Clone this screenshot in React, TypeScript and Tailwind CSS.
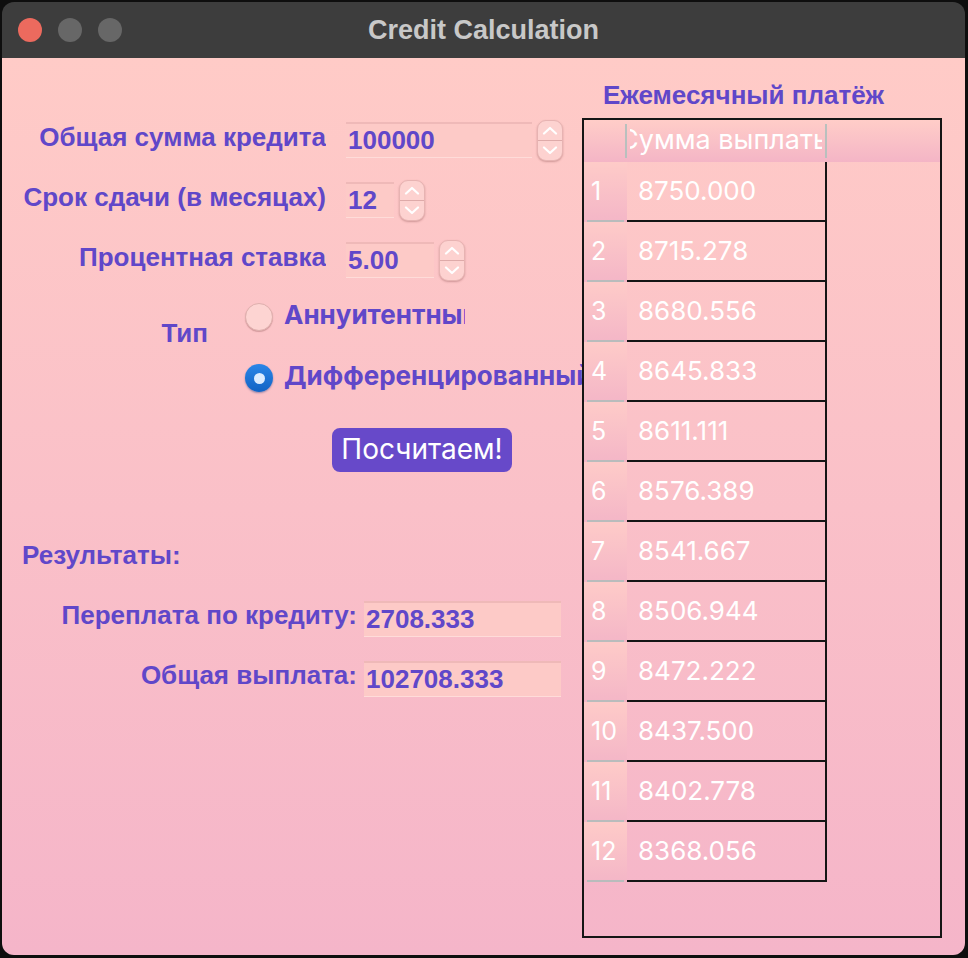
import React from 'react';

const purple = 'text-[#6047c9]';

const payments = [
  '8750.000', '8715.278', '8680.556', '8645.833', '8611.111', '8576.389',
  '8541.667', '8506.944', '8472.222', '8437.500', '8402.778', '8368.056',
];

function Spinner() {
  return (
    <div className="ml-[5px] w-[26px] h-[41px] rounded-[9px] bg-[#fdd2d0] border border-[#e7b3b2] shadow-[0_1px_2px_rgba(120,60,60,0.35)] flex flex-col">
      <div className="flex-1 flex items-center justify-center border-b border-[#deaaa9]">
        <svg width="16" height="9" viewBox="0 0 16 9" fill="none" stroke="#fff" strokeWidth="2.2" strokeLinecap="round" strokeLinejoin="round">
          <path d="M2 7.5 8 2l6 5.5" />
        </svg>
      </div>
      <div className="flex-1 flex items-center justify-center">
        <svg width="16" height="9" viewBox="0 0 16 9" fill="none" stroke="#fff" strokeWidth="2.2" strokeLinecap="round" strokeLinejoin="round">
          <path d="M2 1.5 8 7l6-5.5" />
        </svg>
      </div>
    </div>
  );
}

function Field({ value, width }: { value: string; width: string }) {
  return (
    <div className={`${width} h-[36px] flex items-center pl-[2px] border-t-2 border-[#efb9b8] border-b border-b-[#ffdcd9] bg-[#fdcac7] ${purple} font-bold text-[26px] whitespace-nowrap overflow-hidden`}>
      {value}
    </div>
  );
}

function FormRow({ label, value, width }: { label: string; value: string; width: string }) {
  return (
    <div className="flex items-center h-[40px]">
      <div className={`w-[324px] shrink-0 text-right pb-[6px] whitespace-nowrap overflow-hidden ${purple} font-bold text-[26px] leading-[30px]`}>
        {label}
      </div>
      <div className="ml-[20px] flex items-center">
        <Field value={value} width={width} />
        <Spinner />
      </div>
    </div>
  );
}

export default function App() {
  return (
    <div className="w-[968px] h-[958px] bg-[#0e0e0e] pt-[2px] pl-[2px] pr-[3px] pb-[3px]" style={{ fontFamily: '"Liberation Sans", Arial, sans-serif' }}>
      <div className="h-full rounded-[12px] overflow-hidden flex flex-col">
        {/* title bar */}
        <div className="h-[56px] shrink-0 bg-[#3d3d3d] grid grid-cols-[1fr_auto_1fr] items-center">
          <div className="flex items-center gap-[16px] pl-[16px]">
            <div className="w-[24px] h-[24px] rounded-full bg-[#ec6a5e]" />
            <div className="w-[24px] h-[24px] rounded-full bg-[#676767]" />
            <div className="w-[24px] h-[24px] rounded-full bg-[#676767]" />
          </div>
          <div className="text-[#c8c8c8] font-bold text-[27px]">Credit Calculation</div>
          <div />
        </div>

        {/* content */}
        <div className="flex-1 flex bg-gradient-to-b from-[#ffcbc7] to-[#f5b5c9]">
          {/* left */}
          <div className="w-[580px] shrink-0 overflow-hidden pt-[62px] flex flex-col">
            <div className="flex flex-col gap-[20px]">
              <FormRow label="Общая сумма кредита" value="100000" width="w-[186px]" />
              <FormRow label="Срок сдачи (в месяцах)" value="12" width="w-[48px]" />
              <FormRow label="Процентная ставка" value="5.00" width="w-[88px]" />
            </div>

            <div className="mt-[23px] flex items-start">
              <div className={`w-[243px] shrink-0 pr-[37px] text-right mt-[16px] leading-[28px] ${purple} font-bold text-[26px]`}>Тип</div>
              <div className="flex flex-col gap-[33px] shrink-0" style={{ fontFamily: 'Inter, "Liberation Sans", sans-serif' }}>
                <div className="flex items-center h-[28px]">
                  <div className="w-[28px] h-[28px] shrink-0 rounded-full bg-[#fdd4d2] border border-[#dfb0ae] shadow-[0_1px_1px_rgba(120,60,60,0.3)]" />
                  <span className={`ml-[11px] w-[181px] overflow-hidden whitespace-nowrap ${purple} font-bold text-[26px] pb-[6px]`}>Аннуитентный</span>
                </div>
                <div className="flex items-center h-[28px]">
                  <div className="w-[28px] h-[28px] shrink-0 rounded-full bg-gradient-to-b from-[#2a86e8] to-[#1263c4] shadow-[0_1px_2px_rgba(0,40,120,0.4)] flex items-center justify-center">
                    <div className="w-[11px] h-[11px] rounded-full bg-[#dcecff]" />
                  </div>
                  <span className={`ml-[11px] whitespace-nowrap ${purple} font-bold text-[26px] pb-[6px]`}>Дифференцированный</span>
                </div>
              </div>
            </div>

            <div className="mt-[36px] ml-[330px] w-[180px] h-[44px] rounded-[8px] bg-[#6749c9] text-white text-[28px] flex items-center justify-center pb-[2px]" style={{ fontFamily: 'Inter, "Liberation Sans", sans-serif' }}>
              Посчитаем!
            </div>

            <div className={`mt-[68px] pl-[20px] leading-[30px] ${purple} font-bold text-[26px]`}>Результаты:</div>

            <div className="mt-[30px] flex flex-col gap-[23px]">
              {[
                ['Переплата по кредиту:', '2708.333'],
                ['Общая выплата:', '102708.333'],
              ].map(([label, value]) => (
                <div key={label} className="flex items-center h-[37px]">
                  <div className={`w-[355px] shrink-0 text-right whitespace-nowrap pb-[6px] ${purple} font-bold text-[26px]`}>{label}</div>
                  <div className="ml-[7px]">
                    <Field value={value} width="w-[197px]" />
                  </div>
                </div>
              ))}
            </div>
          </div>

          {/* right */}
          <div className="flex flex-col pt-[22px]">
            <div className={`ml-[21px] mb-[8px] leading-[30px] ${purple} font-bold text-[26px]`}>Ежемесячный платёж</div>
            <div className="w-[360px] h-[820px] border-2 border-[#151515] flex flex-col text-white" style={{ fontFamily: 'Inter, "Liberation Sans", sans-serif' }}>
              <div className="h-[42px] shrink-0 flex bg-gradient-to-b from-[#ffcdc8] to-[#f4b5c6]">
                <div className="w-[43px] shrink-0 flex items-center justify-end">
                  <div className="w-[2px] h-[34px] bg-[#b9c0be]" />
                </div>
                <div className="w-[198px] shrink-0 flex items-center">
                  <div className="ml-[3px] w-[192px] overflow-hidden flex items-center justify-center text-[27px] whitespace-nowrap pb-[2px]">
                    Сумма выплаты
                  </div>
                </div>
                <div className="flex items-center">
                  <div className="w-[2px] h-[34px] bg-[#b9c0be]" />
                </div>
              </div>
              {payments.map((p, i) => (
                <div key={i} className="h-[60px] shrink-0 flex">
                  <div className="w-[43px] shrink-0 flex flex-col bg-gradient-to-b from-[#fecbc8] to-[#f4b6c7]">
                    <div className="flex-1 flex items-center pl-[7px] pt-[2px] text-[25px]">{i + 1}</div>
                    <div className="mx-[3px] h-[2px] bg-[#b9bcbc]" />
                  </div>
                  <div className="w-[200px] shrink-0 border-r-2 border-b-2 border-[#151515] flex items-center pl-[11px] text-[26px] pb-[2px]">
                    {p}
                  </div>
                </div>
              ))}
            </div>
          </div>
        </div>
      </div>
    </div>
  );
}
